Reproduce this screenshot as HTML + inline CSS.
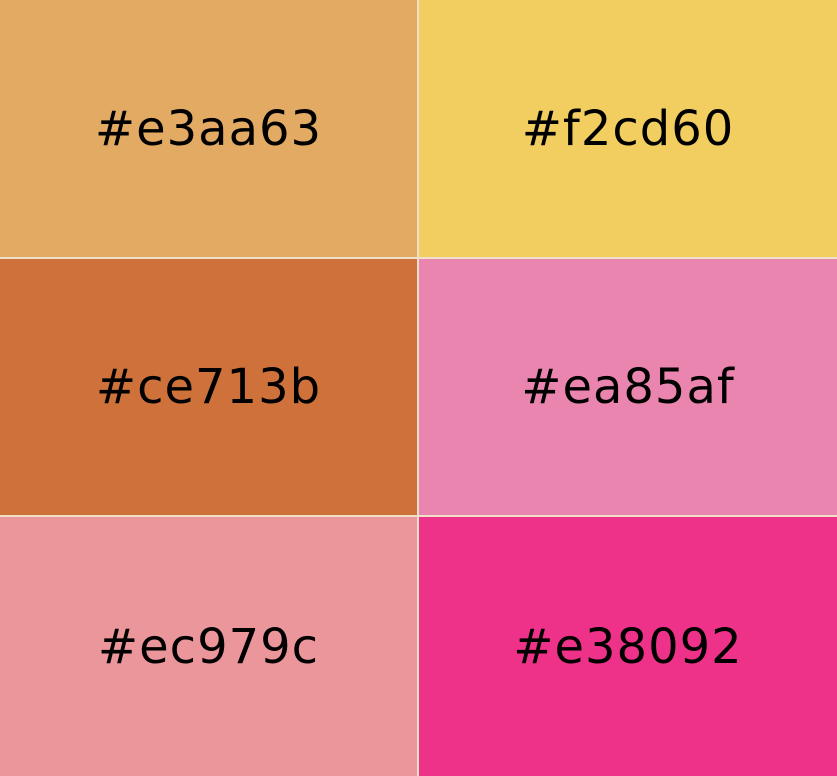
<!DOCTYPE html>
<html><head><style>
html,body{margin:0;padding:0;width:837px;height:776px;overflow:hidden;background:#f0e0c8}
.c{position:absolute;display:flex;align-items:center;justify-content:center;font-family:"Comic Sans MS","DejaVu Sans",sans-serif;font-size:48px;color:#000;letter-spacing:1px}
</style></head><body>
<div class="c" style="left:0;top:0;width:417px;height:257px;background:#e3aa63">#e3aa63</div>
<div class="c" style="left:419px;top:0;width:418px;height:257px;background:#f2cd60">#f2cd60</div>
<div class="c" style="left:0;top:259px;width:417px;height:256px;background:#ce713b">#ce713b</div>
<div class="c" style="left:419px;top:259px;width:418px;height:256px;background:#ea85af">#ea85af</div>
<div class="c" style="left:0;top:517px;width:417px;height:259px;background:#eb969a">#ec979c</div>
<div class="c" style="left:419px;top:517px;width:418px;height:259px;background:#ef3289">#e38092</div>
</body></html>
